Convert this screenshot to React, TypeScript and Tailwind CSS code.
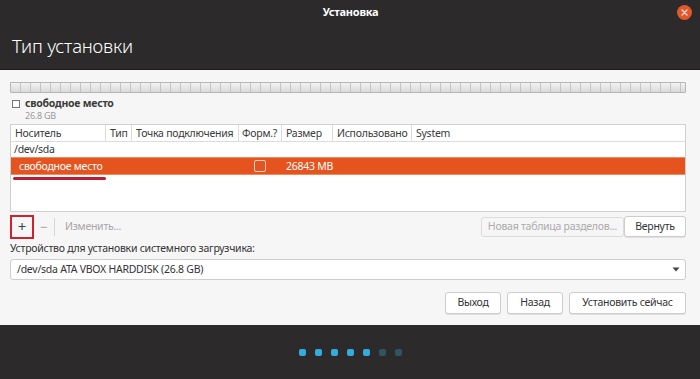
const font = "font-['Noto_Sans',_'DejaVu_Sans',_sans-serif]";

function Dots() {
  const states = [true, true, true, true, true, false, false];
  return (
    <div className="flex gap-[9px]">
      {states.map((on, i) => (
        <span
          key={i}
          className={on ? 'w-[7px] h-[7px] rounded-[2px] bg-[#35ace0]' : 'w-[7px] h-[7px] rounded-[2px] bg-[#2f5563]'}
        />
      ))}
    </div>
  );
}

export default function App() {
  return (
    <div className={`${font} w-[700px] h-[379px] flex flex-col bg-[#f6f6f6] overflow-hidden whitespace-nowrap tracking-[-0.25px]`}>
      <header className="h-[70px] bg-[#2c2a2b] border-b border-[#1d1c1c]">
        <div className="flex items-center h-[24px] px-[8px]">
          <div className="w-[16px]" />
          <div className="flex-1 text-center text-white text-[11px] font-bold">Установка</div>
          <div className="w-[15px] h-[15px] rounded-full bg-[#e2582d] flex items-center justify-center">
            <svg width="7" height="7" viewBox="0 0 7 7">
              <path d="M1 1L6 6M6 1L1 6" stroke="#f4d6c8" strokeWidth="1.4" strokeLinecap="round" />
            </svg>
          </div>
        </div>
        <h1 className="pl-[12px] pt-[10px] text-[18.5px] font-light text-white leading-[24px] tracking-[-0.2px]">Тип установки</h1>
      </header>

      <main className="flex-1 pl-[10px] pr-[14px] pt-[12px] text-[10.5px] text-[#333]">
        <div className="h-[11px] border border-[#b5b5b5] rounded-[1px] bg-[repeating-linear-gradient(90deg,transparent_0,transparent_9px,#c4c4c4_9px,#c4c4c4_10px),linear-gradient(#f2f2f2,#dadada)]" />

        <div className="mt-[4px] pl-[2px] flex items-center gap-[5px] leading-[13px]">
          <span className="w-[8px] h-[8px] border border-[#777] bg-white" />
          <span className="font-bold text-[10.5px] text-[#3c3c3c]">свободное место</span>
        </div>
        <div className="pl-[15px] text-[9px] text-[#9a9a9a] leading-[11px]">26.8 GB</div>

        <div className="relative mt-[3px] h-[88px] border border-[#cfcfcf] bg-white">
          <div className="grid grid-cols-[95px_26px_107px_43px_51px_79px_1fr] h-[17px] border-b border-[#dcdcdc] text-[#3a3a3a] leading-[16px]">
            <div className="pl-[4px] overflow-hidden border-r border-[#dcdcdc]">Носитель</div>
            <div className="pl-[4px] overflow-hidden border-r border-[#dcdcdc]">Тип</div>
            <div className="pl-[4px] overflow-hidden border-r border-[#dcdcdc]">Точка подключения</div>
            <div className="pl-[3px] overflow-hidden border-r border-[#dcdcdc]">Форм.?</div>
            <div className="pl-[4px] overflow-hidden border-r border-[#dcdcdc]">Размер</div>
            <div className="pl-[4px] overflow-hidden border-r border-[#dcdcdc]">Использовано</div>
            <div className="pl-[4px]">System</div>
          </div>
          <div className="h-[15px] pl-[3px] leading-[15px] text-[#333]">/dev/sda</div>
          <div className="grid grid-cols-[95px_26px_107px_43px_51px_79px_1fr] h-[18px] bg-[#e5541f] border-y border-[#f08a5e] text-white leading-[16px]">
            <div className="pl-[8px]">свободное место</div>
            <div />
            <div />
            <div className="flex items-center justify-center pr-[2px]">
              <span className="w-[12px] h-[12px] rounded-[2px] border border-[#f7d2c3]" />
            </div>
            <div className="pl-[4px]">26843 MB</div>
            <div />
            <div />
          </div>
          <div className="absolute left-[2px] top-[52px] w-[93px] h-[3px] rounded-full bg-[#b81d33]" />
        </div>

        <div className="mt-[2px] h-[25px] flex items-center">
          <div className="w-[24px] h-[24px] border-2 border-[#d2202f] flex items-center justify-center text-[15px] text-[#444] leading-none">+</div>
          <div className="w-[20px] text-center text-[14px] text-[#aaa]">−</div>
          <div className="w-px h-[18px] bg-[#d6d6d6]" />
          <div className="pl-[10px] text-[#a7a7a7]">Изменить...</div>
          <div className="flex-1" />
          <div className="h-[20px] w-[143px] border border-[#dcdcdc] rounded-[3px] bg-[#f6f6f6] text-[#ababab] flex items-center justify-center">Новая таблица разделов...</div>
          <div className="h-[21px] w-[62px] border border-[#cdcdcd] rounded-[3px] bg-white text-[#333] flex items-center justify-center shadow-[0_1px_0_#e0e0e0]">Вернуть</div>
        </div>

        <div className="mt-[1px] text-[#333] leading-[16px]">Устройство для установки системного загрузчика:</div>
        <div className="mt-[3px] h-[21px] border border-[#cdcdcd] rounded-[3px] bg-white flex items-center pl-[6px] pr-[5px]">
          <span className="flex-1 text-[#333]">/dev/sda ATA VBOX HARDDISK (26.8 GB)</span>
          <svg width="8" height="5" viewBox="0 0 8 5">
            <path d="M0.5 0.5L7.5 0.5L4 4.5Z" fill="#444" />
          </svg>
        </div>

        <div className="mt-[12px] flex justify-end gap-[6px]">
          <div className="h-[22px] w-[56px] border border-[#cdcdcd] rounded-[3px] bg-white text-[#333] flex items-center justify-center shadow-[0_1px_0_#e0e0e0]">Выход</div>
          <div className="h-[22px] w-[56px] border border-[#cdcdcd] rounded-[3px] bg-white text-[#333] flex items-center justify-center shadow-[0_1px_0_#e0e0e0]">Назад</div>
          <div className="h-[22px] w-[117px] border border-[#cdcdcd] rounded-[3px] bg-white text-[#333] flex items-center justify-center shadow-[0_1px_0_#e0e0e0]">Установить сейчас</div>
        </div>
      </main>

      <footer className="h-[54px] bg-[#2c2a2b] flex items-center justify-center">
        <Dots />
      </footer>
    </div>
  );
}
